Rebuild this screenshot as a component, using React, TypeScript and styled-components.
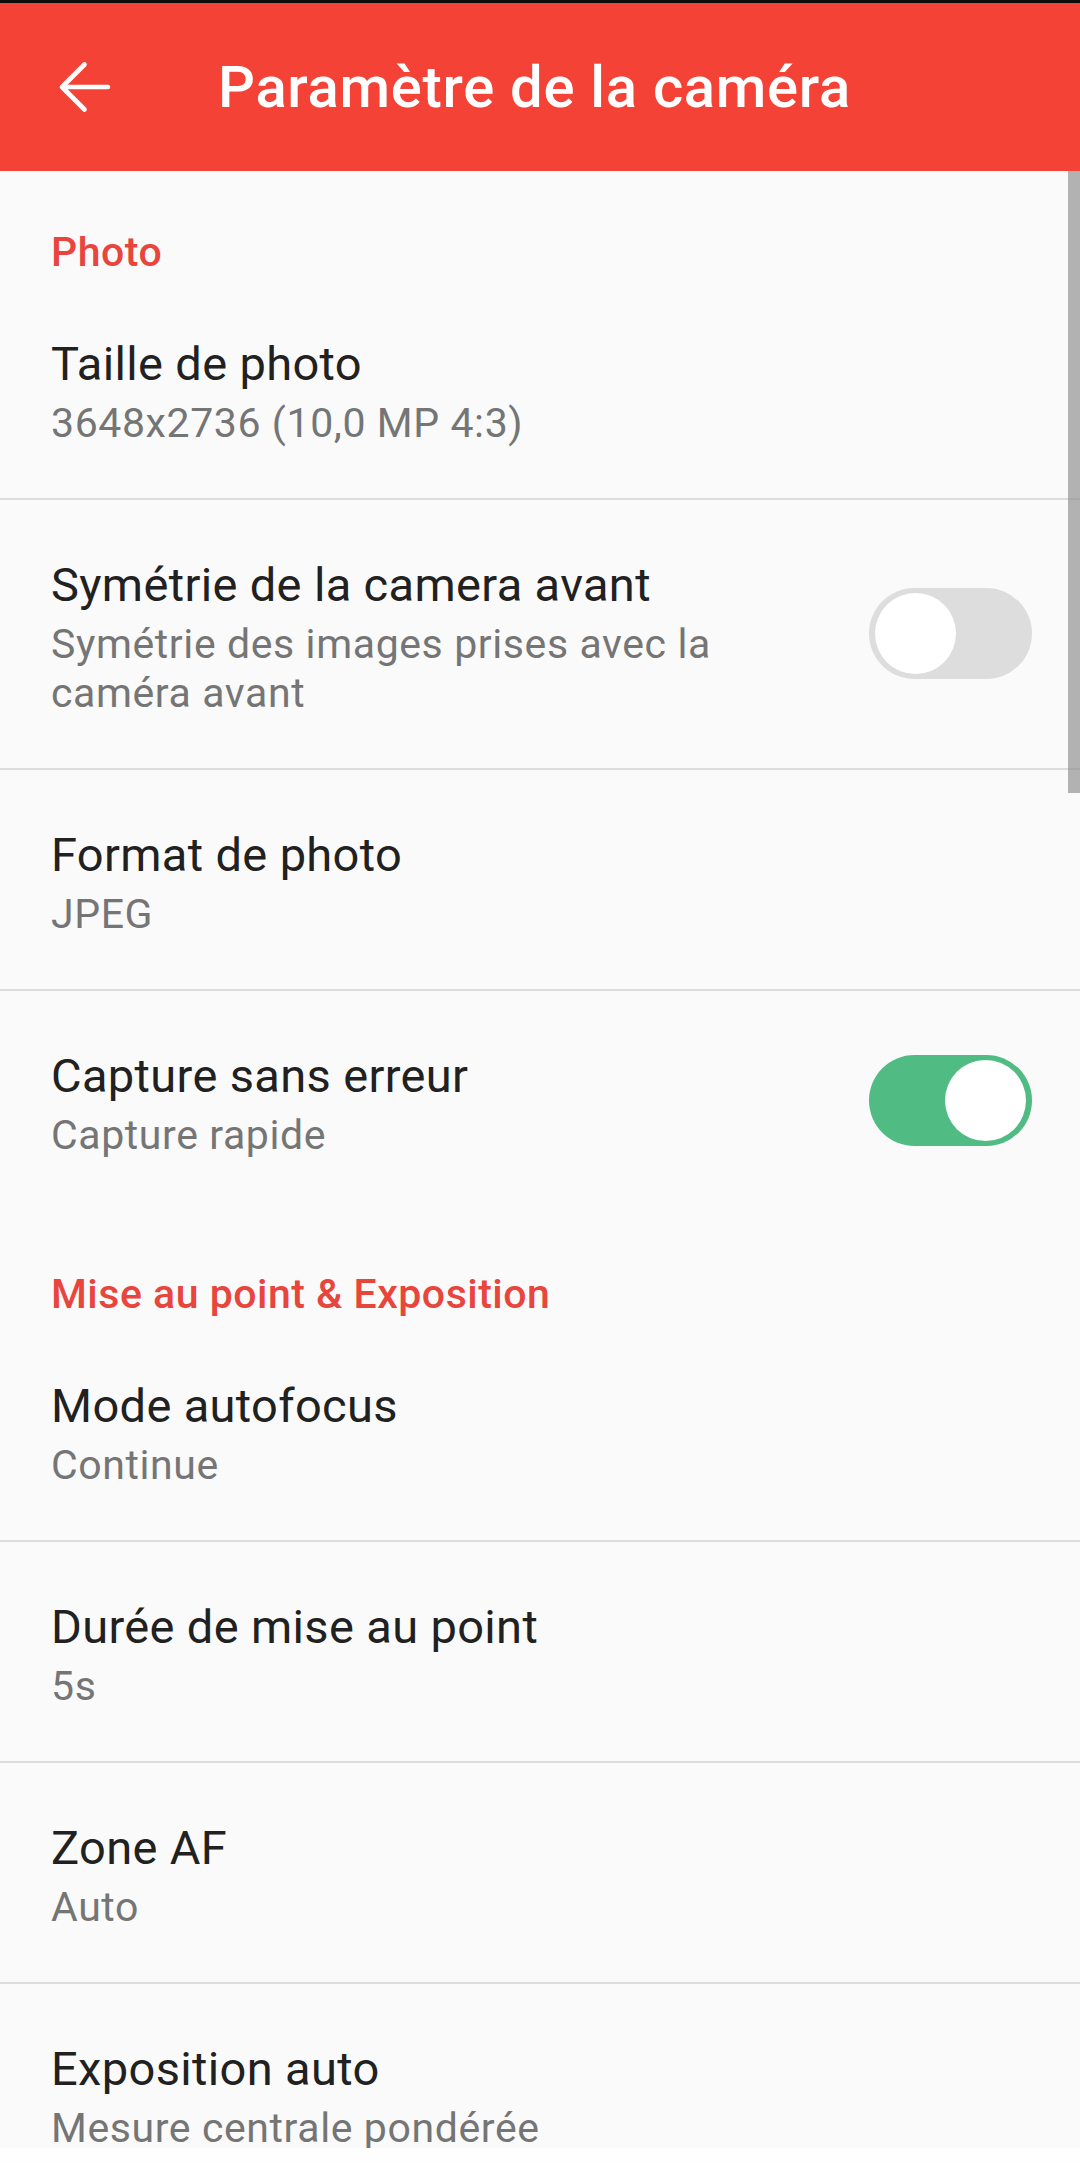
import React from 'react';
import styled, { createGlobalStyle } from 'styled-components';

const GlobalStyle = createGlobalStyle`
  html, body {
    margin: 0;
    padding: 0;
    background: #fefefe;
  }
  body {
    font-family: Roboto, "Noto Sans", "Liberation Sans", sans-serif;
    -webkit-font-smoothing: antialiased;
  }
`;

const Screen = styled.div`
  width: 1080px;
  height: 2163px;
  display: flex;
  flex-direction: column;
  overflow: hidden;
`;

const StatusStrip = styled.div`
  height: 3px;
  flex-shrink: 0;
  background: #0d0d0d;
`;

const AppBar = styled.header`
  height: 168px;
  flex-shrink: 0;
  display: flex;
  align-items: center;
  background: #f44336;
  color: #ffffff;
`;

const BackButton = styled.button`
  display: flex;
  align-items: center;
  justify-content: center;
  width: 56px;
  height: 56px;
  margin-left: 56px;
  padding: 0;
  border: none;
  background: transparent;
  color: inherit;
`;

const Title = styled.h1`
  margin: 0 0 0 106px;
  font-size: 58px;
  line-height: 68px;
  font-weight: 500;
  letter-spacing: 0.7px;
`;

const Content = styled.main`
  position: relative;
  height: 1977px;
  flex-shrink: 0;
  background: #fafafa;
  overflow: hidden;
`;

const Scrollbar = styled.div`
  position: absolute;
  top: 0;
  right: 0;
  width: 12px;
  height: 622px;
  background: rgba(150, 150, 150, 0.72);
`;

const Category = styled.div`
  padding: 57px 51px 2px;
  font-size: 41px;
  line-height: 49px;
  font-weight: 500;
  letter-spacing: 0.5px;
  color: #e8453c;
`;

const Row = styled.div<{ $divider: boolean }>`
  display: flex;
  align-items: center;
  padding: 57px 48px ${({ $divider }) => ($divider ? '50px' : '53px')} 51px;
  border-bottom: ${({ $divider }) => ($divider ? '2px solid #dcdcdc' : '0')};
`;

const TextBlock = styled.div`
  flex: 1;
  min-width: 0;
`;

const Primary = styled.div`
  font-size: 47px;
  line-height: 56px;
  letter-spacing: 0.35px;
  color: #212121;
`;

const Secondary = styled.div`
  margin-top: 7px;
  font-size: 41px;
  line-height: 49px;
  letter-spacing: 0.6px;
  color: #757575;
`;

const Track = styled.div<{ $on: boolean }>`
  display: flex;
  align-items: center;
  justify-content: ${({ $on }) => ($on ? 'flex-end' : 'flex-start')};
  flex-shrink: 0;
  box-sizing: border-box;
  width: 163px;
  height: 91px;
  margin: 0 0 8px 60px;
  padding: 0 6px;
  border-radius: 46px;
  background: ${({ $on }) => ($on ? '#50bc83' : '#dddddd')};
`;

const Thumb = styled.div`
  width: 81px;
  height: 81px;
  border-radius: 50%;
  background: #ffffff;
`;

type Item = {
  title: string;
  summary: string;
  toggle?: boolean;
  divider?: boolean;
};

type Section = {
  name: string;
  items: Item[];
};

const sections: Section[] = [
  {
    name: 'Photo',
    items: [
      { title: 'Taille de photo', summary: '3648x2736 (10,0 MP 4:3)', divider: true },
      {
        title: 'Symétrie de la camera avant',
        summary: 'Symétrie des images prises avec la caméra avant',
        toggle: false,
        divider: true,
      },
      { title: 'Format de photo', summary: 'JPEG', divider: true },
      { title: 'Capture sans erreur', summary: 'Capture rapide', toggle: true },
    ],
  },
  {
    name: 'Mise au point & Exposition',
    items: [
      { title: 'Mode autofocus', summary: 'Continue', divider: true },
      { title: 'Durée de mise au point', summary: '5s', divider: true },
      { title: 'Zone AF', summary: 'Auto', divider: true },
      { title: 'Exposition auto', summary: 'Mesure centrale pondérée', divider: true },
    ],
  },
];

function BackArrow() {
  return (
    <svg width="56" height="56" viewBox="0 0 56 56" fill="none">
      <path
        d="M6 28H52M6 28L28.5 5.5M6 28L28.5 50.5"
        stroke="#ffffff"
        strokeWidth="4.6"
        strokeLinecap="round"
        strokeLinejoin="round"
      />
    </svg>
  );
}

export default function App(): JSX.Element {
  return (
    <Screen>
      <GlobalStyle />
      <StatusStrip />
      <AppBar>
        <BackButton aria-label="Retour">
          <BackArrow />
        </BackButton>
        <Title>Paramètre de la caméra</Title>
      </AppBar>
      <Content>
        {sections.map((section) => (
          <section key={section.name}>
            <Category>{section.name}</Category>
            {section.items.map((item) => (
              <Row key={item.title} $divider={!!item.divider}>
                <TextBlock>
                  <Primary>{item.title}</Primary>
                  <Secondary>{item.summary}</Secondary>
                </TextBlock>
                {item.toggle !== undefined && (
                  <Track $on={item.toggle}>
                    <Thumb />
                  </Track>
                )}
              </Row>
            ))}
          </section>
        ))}
        <Scrollbar />
      </Content>
    </Screen>
  );
}
